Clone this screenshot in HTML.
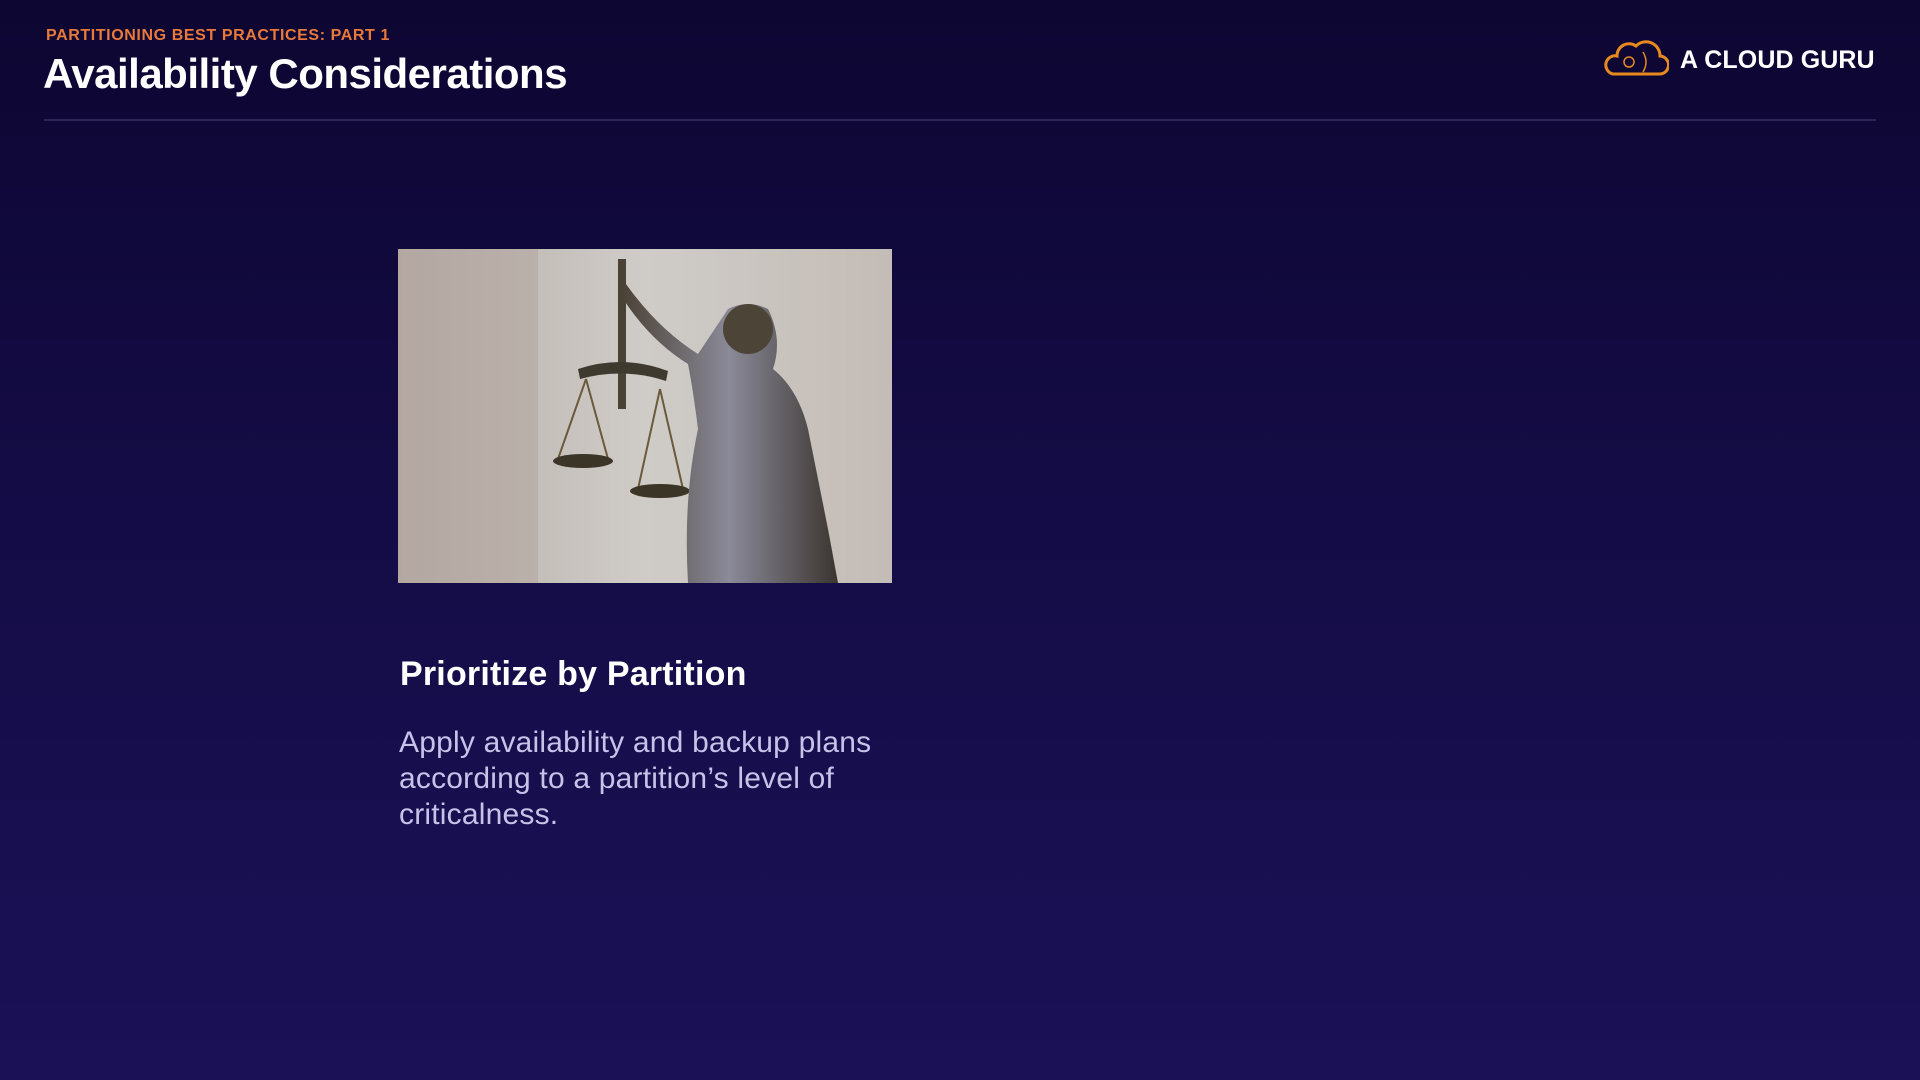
<!DOCTYPE html>
<html><head><meta charset="utf-8"><style>
html,body{margin:0;padding:0}
body{width:1920px;height:1080px;overflow:hidden;background:linear-gradient(180deg,#0d0632 0%,#140c45 45%,#1a1157 100%);font-family:"Liberation Sans",sans-serif;position:relative}
.kick{position:absolute;left:46px;top:27px;color:#e8793a;font-weight:bold;font-size:16px;letter-spacing:0.6px}
.title{position:absolute;left:43px;top:50px;color:#fff;font-weight:bold;font-size:42px;letter-spacing:-0.5px}
.rule{position:absolute;left:44px;top:119px;width:1832px;height:2px;background:#2c2558}
.logo{position:absolute;left:1680px;top:46px;color:#fff;font-weight:bold;font-size:25px;letter-spacing:0.1px}
.h{position:absolute;left:400px;top:655px;color:#fff;font-weight:bold;font-size:34px;letter-spacing:0.2px}
.p{position:absolute;left:399px;top:725px;width:560px;color:#c6c2e8;font-size:30px;line-height:36px;letter-spacing:0.2px}
</style></head><body>
<div class="kick">PARTITIONING BEST PRACTICES: PART 1</div>
<div class="title">Availability Considerations</div>
<div class="rule"></div>
<svg style="position:absolute;left:1603px;top:38px" width="66" height="40" viewBox="0 0 66 40">
<path d="M10 36 H56 A9 9 0 0 0 57 18 A14 14 0 0 0 33 8 A12 12 0 0 0 14 18 A9 9 0 0 0 10 36 Z" fill="none" stroke="#e8891f" stroke-width="3"/>
<circle cx="26" cy="24" r="5" fill="none" stroke="#e8891f" stroke-width="1.5"/>
<path d="M40 14 Q46 24 40 34" fill="none" stroke="#e8891f" stroke-width="1.5"/>
</svg>
<div class="logo">A CLOUD GURU</div>
<svg style="position:absolute;left:398px;top:249px" width="494" height="334" viewBox="0 0 494 334">
<defs><linearGradient id="bg" x1="0" x2="1"><stop offset="0" stop-color="#b7aca6"/><stop offset="0.5" stop-color="#cfccc8"/><stop offset="1" stop-color="#c4bcb6"/></linearGradient>
<linearGradient id="br" x1="0" x2="1"><stop offset="0" stop-color="#4a4035"/><stop offset="0.5" stop-color="#8a8a98"/><stop offset="1" stop-color="#3b3530"/></linearGradient></defs>
<rect width="494" height="334" fill="url(#bg)"/>
<rect x="0" y="0" width="140" height="334" fill="#b0a49c" opacity="0.5"/>
<rect x="220" y="10" width="8" height="150" fill="#4a4236"/>
<path d="M180 120 Q225 105 270 122 L268 132 Q225 118 182 130Z" fill="#3e3a30"/>
<path d="M188 130 L160 210 M188 130 L210 210 M262 140 L240 240 M262 140 L285 240" stroke="#6a5a3a" stroke-width="2"/>
<ellipse cx="185" cy="212" rx="30" ry="7" fill="#3a3526"/>
<ellipse cx="262" cy="242" rx="30" ry="7" fill="#3a3526"/>
<path d="M228 35 Q260 80 300 105 L330 60 Q350 50 370 60 Q385 90 375 120 Q400 140 410 180 L430 280 L440 334 L290 334 Q285 250 300 180 Q295 140 290 115 Q250 90 222 45Z" fill="url(#br)"/>
<circle cx="350" cy="80" r="25" fill="#4d4438"/>
</svg>
<div class="h">Prioritize by Partition</div>
<div class="p">Apply availability and backup plans according to a partition’s level of criticalness.</div>
</body></html>
